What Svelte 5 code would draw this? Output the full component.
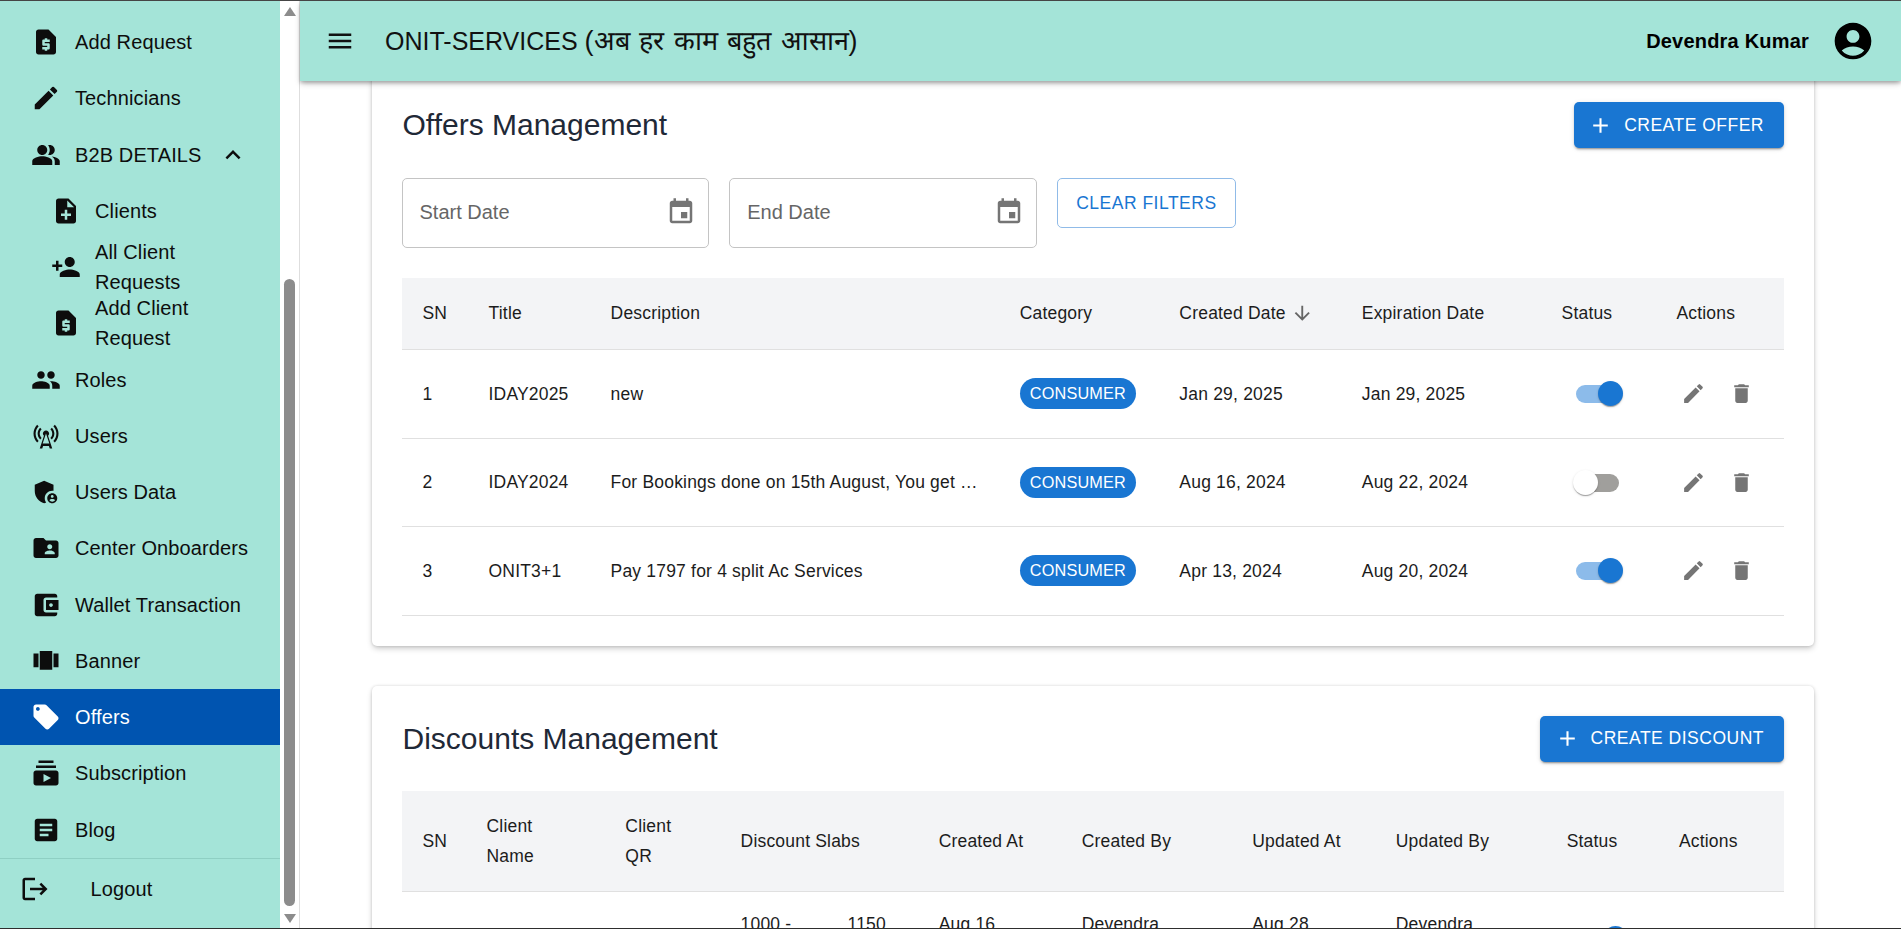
<script>
  const ic = {
    quote: "M14 2H6c-1.1 0-1.99.9-1.99 2L4 20c0 1.1.89 2 1.99 2H18c1.1 0 2-.9 2-2V8l-6-6zm1 10h-4v1h3c.55 0 1 .45 1 1v3c0 .55-.45 1-1 1h-1v1h-2v-1H9v-2h4v-1h-3c-.55 0-1-.45-1-1v-3c0-.55.45-1 1-1h1V9h2v1h2v2z",
    edit: "M3 17.25V21h3.75L17.81 9.94l-3.75-3.75L3 17.25zM20.71 7.04c.39-.39.39-1.02 0-1.41l-2.34-2.34a.9959.9959 0 0 0-1.41 0l-1.83 1.83 3.75 3.75 1.83-1.83z",
    peopleAlt: "M16.67 13.13C18.04 14.06 19 15.32 19 17v3h4v-3c0-2.18-3.57-3.47-6.33-3.87zM9 12c2.21 0 4-1.79 4-4s-1.79-4-4-4-4 1.79-4 4 1.79 4 4 4zM15 12c2.21 0 4-1.79 4-4s-1.79-4-4-4c-.47 0-.91.1-1.33.24C14.5 5.27 15 6.58 15 8s-.5 2.73-1.33 3.76c.42.14.86.24 1.33.24zM9 13c-2.67 0-8 1.34-8 4v3h16v-3c0-2.66-5.33-4-8-4z",
    noteAdd: "M14 2H6c-1.1 0-1.99.9-1.99 2L4 20c0 1.1.89 2 1.99 2H18c1.1 0 2-.9 2-2V8l-6-6zm2 14h-3v3h-2v-3H8v-2h3v-3h2v3h3v2zm-3-7V3.5L18.5 9H13z",
    personAdd: "M15 12c2.21 0 4-1.79 4-4s-1.79-4-4-4-4 1.79-4 4 1.79 4 4 4zm-9-2V7H4v3H1v2h3v3h2v-3h3v-2H6zm9 4c-2.67 0-8 1.34-8 4v2h16v-2c0-2.66-5.33-4-8-4z",
    group: "M16 11c1.66 0 2.99-1.34 2.99-3S17.66 5 16 5c-1.66 0-3 1.34-3 3s1.34 3 3 3zm-8 0c1.66 0 2.99-1.34 2.99-3S9.66 5 8 5C6.34 5 5 6.34 5 8s1.34 3 3 3zm0 2c-2.33 0-7 1.17-7 3.5V19h14v-2.5c0-2.33-4.67-3.5-7-3.5zm8 0c-.29 0-.62.02-.97.05 1.16.84 1.97 1.97 1.97 3.45V19h6v-2.5c0-2.33-4.67-3.5-7-3.5z",
    tower: "M7.3 14.7l1.2-1.2c-1-1-1.5-2.3-1.5-3.5 0-1.3.5-2.6 1.5-3.5L7.3 5.3c-1.3 1.3-2 3-2 4.7s.7 3.4 2 4.7zM19.1 2.9l-1.2 1.2c1.6 1.6 2.4 3.8 2.4 5.9 0 2.1-.8 4.3-2.4 5.9l1.2 1.2c2-2 2.9-4.5 2.9-7.1 0-2.6-1-5.1-2.9-7.1zM6.1 4.1 4.9 2.9C3 4.9 2 7.4 2 10c0 2.6 1 5.1 2.9 7.1l1.2-1.2c-1.6-1.6-2.4-3.8-2.4-5.9 0-2.1.8-4.3 2.4-5.9zm10.6 10.6c1.3-1.3 2-3 2-4.7-.1-1.7-.7-3.4-2-4.7l-1.2 1.2c1 1 1.5 2.3 1.5 3.5 0 1.3-.5 2.6-1.5 3.5l1.2 1.2zM14.5 10c0-1.38-1.12-2.5-2.5-2.5S9.5 8.62 9.5 10c0 .76.34 1.42.87 1.88L7 22h2l.67-2h4.67l.66 2h2l-3.37-10.12c.53-.46.87-1.12.87-1.88zm-5.17 8L12 10l2.67 8H9.33z",
    admin: "M17 11c.34 0 .67.04 1 .09V6.27L10.5 3 3 6.27v4.91c0 4.54 3.2 8.79 7.5 9.82.55-.13 1.08-.32 1.6-.55-.69-.98-1.1-2.17-1.1-3.45 0-3.31 2.69-6 6-6zM17 13c-2.21 0-4 1.79-4 4s1.79 4 4 4 4-1.79 4-4-1.79-4-4-4zm0 1.38c.62 0 1.12.51 1.12 1.12s-.51 1.12-1.12 1.12-1.12-.51-1.12-1.12.5-1.12 1.12-1.12zm0 5.37c-.93 0-1.74-.46-2.24-1.17.05-.72 1.51-1.08 2.24-1.08s2.19.36 2.24 1.08c-.5.71-1.31 1.17-2.24 1.17z",
    folder: "M20 6h-8l-2-2H4c-1.1 0-1.99.9-1.99 2L2 18c0 1.1.9 2 2 2h16c1.1 0 2-.9 2-2V8c0-1.1-.9-2-2-2zm-5 3c1.1 0 2 .9 2 2s-.9 2-2 2-2-.9-2-2 .9-2 2-2zm4 8h-8v-1c0-1.33 2.67-2 4-2s4 .67 4 2v1z",
    wallet: "M21 18v1c0 1.1-.9 2-2 2H5c-1.11 0-2-.9-2-2V5c0-1.1.89-2 2-2h14c1.1 0 2 .9 2 2v1h-9c-1.11 0-2 .9-2 2v8c0 1.1.89 2 2 2h9zm-9-2h10V8H12v8zm4-2.5c-.83 0-1.5-.67-1.5-1.5s.67-1.5 1.5-1.5 1.5.67 1.5 1.5-.67 1.5-1.5 1.5z",
    carousel: "M7 19h10V4H7v15zm-5-2h4V6H2v11zM18 6v11h4V6h-4z",
    tag: "M21.41 11.58l-9-9C12.05 2.22 11.55 2 11 2H4c-1.1 0-2 .9-2 2v7c0 .55.22 1.05.59 1.42l9 9c.36.36.86.58 1.41.58.55 0 1.05-.22 1.41-.59l7-7c.37-.36.59-.86.59-1.41 0-.55-.23-1.06-.59-1.42zM5.5 7C4.67 7 4 6.33 4 5.5S4.67 4 5.5 4 7 4.67 7 5.5 6.33 7 5.5 7z",
    subs: "M20 8H4V6h16v2zm-2-6H6v2h12V2zm4 10v8c0 1.1-.9 2-2 2H4c-1.1 0-2-.9-2-2v-8c0-1.1.9-2 2-2h16c1.1 0 2 .9 2 2zm-6 4-6-3.27v6.53L16 16z",
    article: "M19 3H5c-1.1 0-2 .9-2 2v14c0 1.1.9 2 2 2h14c1.1 0 2-.9 2-2V5c0-1.1-.9-2-2-2zm-5 14H7v-2h7v2zm3-4H7v-2h10v2zm0-4H7V7h10v2z",
    logout: "M17 7l-1.41 1.41L18.17 11H8v2h10.17l-2.58 2.58L17 17l5-5zM4 5h8V3H4c-1.1 0-2 .9-2 2v14c0 1.1.9 2 2 2h8v-2H4V5z",
    less: "M12 8l-6 6 1.41 1.41L12 10.83l4.59 4.58L18 14z",
    menu: "M3 18h18v-2H3v2zm0-5h18v-2H3v2zm0-7v2h18V6H3z",
    account: "M12 2C6.48 2 2 6.48 2 12s4.48 10 10 10 10-4.48 10-10S17.52 2 12 2zm0 4c1.93 0 3.5 1.57 3.5 3.5S13.93 13 12 13s-3.5-1.57-3.5-3.5S10.07 6 12 6zm0 14c-2.03 0-4.43-.82-6.14-2.88C7.55 15.8 9.68 15 12 15s4.45.8 6.14 2.12C16.43 19.18 14.03 20 12 20z",
    event: "M17 12h-5v5h5v-5zM16 1v2H8V1H6v2H5c-1.11 0-1.99.9-1.99 2L3 19c0 1.1.89 2 2 2h14c1.1 0 2-.9 2-2V5c0-1.1-.9-2-2-2h-1V1h-2zm3 18H5V8h14v11z",
    del: "M6 19c0 1.1.9 2 2 2h8c1.1 0 2-.9 2-2V7H6v12zM19 4h-3.5l-1-1h-5l-1 1H5v2h14V4z",
    add: "M19 13h-6v6h-2v-6H5v-2h6V5h2v6h6v2z",
    down: "M20 12l-1.41-1.41L13 16.17V4h-2v12.17l-5.58-5.59L4 12l8 8 8-8z",
  };

  const nav = [
    { label: "Add Request", icon: ic.quote },
    { label: "Technicians", icon: ic.edit },
    { label: "B2B DETAILS", icon: ic.peopleAlt, open: true },
    { label: "Clients", icon: ic.noteAdd, sub: true },
    { label: "All Client Requests", icon: ic.personAdd, sub: true },
    { label: "Add Client Request", icon: ic.quote, sub: true },
    { label: "Roles", icon: ic.group },
    { label: "Users", icon: ic.tower },
    { label: "Users Data", icon: ic.admin },
    { label: "Center Onboarders", icon: ic.folder },
    { label: "Wallet Transaction", icon: ic.wallet },
    { label: "Banner", icon: ic.carousel },
    { label: "Offers", icon: ic.tag, active: true },
    { label: "Subscription", icon: ic.subs },
    { label: "Blog", icon: ic.article },
  ];

  const offers = [
    { title: "IDAY2025", desc: "new", created: "Jan 29, 2025", expires: "Jan 29, 2025", on: true },
    { title: "IDAY2024", desc: "For Bookings done on 15th August, You get Rs.100 off on all services", created: "Aug 16, 2024", expires: "Aug 22, 2024", on: false },
    { title: "ONIT3+1", desc: "Pay 1797 for 4 split Ac Services", created: "Apr 13, 2024", expires: "Aug 20, 2024", on: true },
  ];
</script>

{#snippet icon(d, cls = "")}
  <svg class="icon {cls}" viewBox="0 0 24 24" aria-hidden="true"><path fill-rule="evenodd" {d} /></svg>
{/snippet}

{#snippet toggle(on)}
  <span class="switch" class:on><span class="track"></span><span class="knob"></span></span>
{/snippet}

<div class="app">
  <aside class="sidebar">
    <nav class="nav">
      <div class="nav-list">
        {#each nav as item}
          <div class="nav-row" class:sub={item.sub} class:active={item.active}>
            {@render icon(item.icon, "nav-icon")}
            <span class="nav-label">{item.label}</span>
            {#if item.open}
              {@render icon(ic.less, "chevron")}
            {/if}
          </div>
        {/each}
      </div>
      <div class="logout">
        {@render icon(ic.logout, "nav-icon")}
        <span>Logout</span>
      </div>
    </nav>
    <div class="scrollbar">
      <span class="arrow up"></span>
      <span class="thumb"></span>
      <span class="arrow dn"></span>
    </div>
  </aside>

  <div class="main">
    <header class="topbar">
      {@render icon(ic.menu, "menu-icon")}
      <h1>ONIT-SERVICES <span class="hindi">(अब हर काम बहुत आसान)</span></h1>
      <span class="user">Devendra Kumar</span>
      {@render icon(ic.account, "avatar")}
    </header>

    <div class="content">
      <section class="card">
        <div class="card-head">
          <h2>Offers Management</h2>
          <button class="btn-primary">{@render icon(ic.add, "add-icon")}CREATE OFFER</button>
        </div>
        <div class="filters">
          <div class="date-field"><span>Start Date</span>{@render icon(ic.event, "cal")}</div>
          <div class="date-field"><span>End Date</span>{@render icon(ic.event, "cal")}</div>
          <button class="btn-outline">CLEAR FILTERS</button>
        </div>
        <table class="offers">
          <colgroup>
            <col style="width:67px" /><col style="width:122px" /><col style="width:409px" /><col style="width:159.6px" />
            <col style="width:182.4px" /><col style="width:199.7px" /><col style="width:114.8px" /><col style="width:127.5px" />
          </colgroup>
          <thead>
            <tr>
              <th>SN</th><th>Title</th><th>Description</th><th>Category</th>
              <th><span class="sort">Created Date {@render icon(ic.down, "sort-icon")}</span></th>
              <th><span class="sort">Expiration Date</span></th>
              <th>Status</th><th>Actions</th>
            </tr>
          </thead>
          <tbody>
            {#each offers as o, i}
              <tr>
                <td>{i + 1}</td>
                <td>{o.title}</td>
                <td class="desc">{o.desc}</td>
                <td><span class="chip">CONSUMER</span></td>
                <td>{o.created}</td>
                <td>{o.expires}</td>
                <td>{@render toggle(o.on)}</td>
                <td>
                  <div class="actions">
                    {@render icon(ic.edit, "act")}
                    {@render icon(ic.del, "act")}
                  </div>
                </td>
              </tr>
            {/each}
          </tbody>
        </table>
      </section>

      <section class="card">
        <div class="card-head tight">
          <h2>Discounts Management</h2>
          <button class="btn-primary">{@render icon(ic.add, "add-icon")}CREATE DISCOUNT</button>
        </div>
        <table class="discounts">
          <colgroup>
            <col style="width:65px" /><col style="width:138.8px" /><col style="width:115.2px" /><col style="width:198px" /><col style="width:143px" />
            <col style="width:170.5px" /><col style="width:143.5px" /><col style="width:170.8px" /><col style="width:112.2px" /><col style="width:125px" />
          </colgroup>
          <thead>
            <tr>
              <th>SN</th><th>Client<br />Name</th><th>Client<br />QR</th><th>Discount Slabs</th><th>Created At</th>
              <th>Created By</th><th>Updated At</th><th>Updated By</th><th>Status</th><th>Actions</th>
            </tr>
          </thead>
          <tbody>
            <tr>
              <td>1</td><td></td><td></td>
              <td class="slab-cell"><div class="slab"><span>1000 -</span><span>1150</span></div></td>
              <td>Aug 16, 2024</td>
              <td>Devendra Kumar</td>
              <td>Aug 28, 2024</td>
              <td>Devendra Kumar</td>
              <td>{@render toggle(true)}</td>
              <td></td>
            </tr>
          </tbody>
        </table>
      </section>
    </div>
  </div>
</div>

<style>
  :global(body) {
    margin: 0;
    overflow: hidden;
    font-family: "Liberation Sans", Arial, sans-serif;
  }

  * {
    box-sizing: border-box;
  }

  .app {
    display: flex;
    height: 100vh;
    overflow: hidden;
    background: #fff;
    border-top: 1px solid #454545;
    border-bottom: 1px solid #2e2e2e;
  }

  .icon {
    display: block;
    flex: none;
    width: 30px;
    height: 30px;
    fill: currentColor;
  }

  /* sidebar */
  .sidebar {
    display: flex;
    flex: none;
    width: 300px;
  }

  .nav {
    width: 280px;
    padding-top: 13px;
    background: #a4e4d8;
    color: #0d0d0d;
    font-size: 20px;
    line-height: 30px;
    letter-spacing: 0.12px;
  }

  .nav-list {
    border-bottom: 1px solid #8fcfc3;
  }

  .nav-row {
    display: flex;
    align-items: center;
    height: 56.25px;
    padding-left: 31px;
  }

  .nav-row.sub {
    padding-left: 51px;
  }

  .nav-row.sub .nav-label {
    width: 150px;
  }

  .nav-row.active {
    background: #0054b0;
    color: #fff;
  }

  .nav-label {
    margin-left: 14px;
  }

  .chevron {
    margin-left: 16px;
  }

  .logout {
    display: flex;
    align-items: center;
    height: 60px;
    padding-left: 19.5px;
  }

  .logout span {
    margin-left: 41px;
  }

  .scrollbar {
    display: flex;
    flex-direction: column;
    align-items: center;
    width: 20px;
    background: #fff;
    border-right: 1px solid #dedede;
  }

  .arrow {
    width: 0;
    height: 0;
    border-left: 6.5px solid transparent;
    border-right: 6.5px solid transparent;
  }

  .arrow.up {
    margin-top: 6px;
    border-bottom: 9px solid #8c8c8c;
  }

  .arrow.dn {
    margin-top: 8px;
    border-top: 9px solid #8c8c8c;
  }

  .thumb {
    width: 11px;
    height: 627px;
    margin-top: 263px;
    border-radius: 6px;
    background: #8c8c8c;
  }

  /* top bar */
  .main {
    flex: 1;
    min-width: 0;
  }

  .topbar {
    position: relative;
    z-index: 2;
    display: flex;
    align-items: center;
    height: 80px;
    padding: 0 26.4px 0 25px;
    background: #a4e4d8;
    color: #111;
    box-shadow: 0 3px 6px -1px rgba(0, 0, 0, 0.3), 0 2px 3px rgba(0, 0, 0, 0.14);
  }

  .topbar h1 {
    flex: 1;
    margin: 0 0 0 30px;
    font-size: 25px;
    font-weight: 400;
    line-height: 32px;
  }

  .hindi {
    font-size: 27px;
    word-spacing: 2px;
  }

  .user {
    font-size: 20px;
    font-weight: 700;
    letter-spacing: 0.2px;
    color: #000;
  }

  .avatar {
    width: 44px;
    height: 44px;
    margin-left: 21.6px;
    color: #000;
  }

  /* cards */
  .content {
    display: flex;
    flex-direction: column;
    gap: 40px;
    margin-top: -9px;
    padding: 0 87px 0 71.5px;
  }

  .card {
    padding: 30px;
    background: #fff;
    border-radius: 5px;
    box-shadow: 0 3px 6px -1px rgba(0, 0, 0, 0.24), 0 0 3px rgba(0, 0, 0, 0.14);
  }

  .card-head {
    display: flex;
    justify-content: space-between;
    align-items: center;
    margin-bottom: 30px;
  }

  .card-head.tight {
    margin-bottom: 29px;
  }

  h2 {
    margin: 0 0 0 1px;
    font-size: 30px;
    font-weight: 400;
    color: #1f2937;
  }

  .btn-primary {
    display: flex;
    align-items: center;
    height: 46px;
    padding: 0 20px 0 14.5px;
    border: 0;
    border-radius: 5px;
    background: #1976d2;
    color: #fff;
    font: 500 17.5px "Liberation Sans", Arial, sans-serif;
    letter-spacing: 0.5px;
    box-shadow: 0 3px 1px -2px rgba(0, 0, 0, 0.2), 0 2px 2px rgba(0, 0, 0, 0.14), 0 1px 5px rgba(0, 0, 0, 0.12);
  }

  .add-icon {
    width: 25px;
    height: 25px;
    margin-right: 11px;
  }

  .filters {
    display: flex;
    align-items: flex-start;
    gap: 20px;
    margin-bottom: 30px;
  }

  .date-field {
    display: flex;
    align-items: center;
    justify-content: space-between;
    width: 307.7px;
    height: 70px;
    padding: 0 12px 2px 17px;
    border: 1px solid #c4c4c4;
    border-radius: 5px;
    color: #666;
    font-size: 20px;
  }

  .cal {
    color: #757575;
  }

  .btn-outline {
    width: 179px;
    height: 50px;
    padding: 0;
    border: 1px solid #90bbe8;
    border-radius: 5px;
    background: #fff;
    color: #1976d2;
    font: 500 17.5px "Liberation Sans", Arial, sans-serif;
    letter-spacing: 0.5px;
  }

  /* tables */
  table {
    width: 100%;
    table-layout: fixed;
    border-collapse: collapse;
    color: #1c1c1c;
    font-size: 17.5px;
    line-height: 30px;
    letter-spacing: 0.19px;
  }

  th {
    padding: 19px 20px 21px;
    background: #f3f4f6;
    border-bottom: 1px solid #e0e0e0;
    font-weight: 400;
    text-align: left;
  }

  .discounts th {
    padding-top: 20px;
    padding-bottom: 20px;
  }

  td {
    padding: 0 20px;
    border-bottom: 1px solid #e0e0e0;
  }

  th:first-child,
  td:first-child {
    padding-left: 21px;
  }

  .offers td {
    height: 88.5px;
  }

  .discounts td {
    padding-top: 17px;
    padding-bottom: 17px;
  }

  .discounts .slab-cell {
    vertical-align: top;
  }

  .sort {
    display: inline-flex;
    align-items: center;
    gap: 5px;
    padding-top: 1px;
    white-space: nowrap;
  }

  .sort-icon {
    width: 22.5px;
    height: 22.5px;
    color: #666;
  }

  .desc {
    overflow: hidden;
    white-space: nowrap;
    text-overflow: ellipsis;
  }

  .chip {
    display: inline-block;
    height: 31px;
    padding: 0 10px;
    border-radius: 16px;
    background: #1976d2;
    color: #fff;
    font-size: 16.25px;
    line-height: 31px;
  }

  .slab {
    display: grid;
    grid-template-columns: 107px 1fr;
  }

  .switch {
    position: relative;
    display: block;
    width: 62px;
    height: 25px;
  }

  .track {
    position: absolute;
    left: 14px;
    top: 4px;
    width: 43px;
    height: 18px;
    border-radius: 9px;
    background: #a09f9c;
  }

  .knob {
    position: absolute;
    left: 11px;
    top: 0;
    width: 25px;
    height: 25px;
    border-radius: 50%;
    background: #fff;
    box-shadow: 0 2px 1px -1px rgba(0, 0, 0, 0.2), 0 1px 1px rgba(0, 0, 0, 0.14), 0 1px 3px rgba(0, 0, 0, 0.12);
  }

  .switch.on .track {
    background: #8cbbea;
  }

  .switch.on .knob {
    left: 36px;
    background: #1976d2;
  }

  .actions {
    display: flex;
    gap: 23px;
    margin-left: 5px;
    color: #757575;
  }

  .act {
    width: 25px;
    height: 25px;
  }
</style>
